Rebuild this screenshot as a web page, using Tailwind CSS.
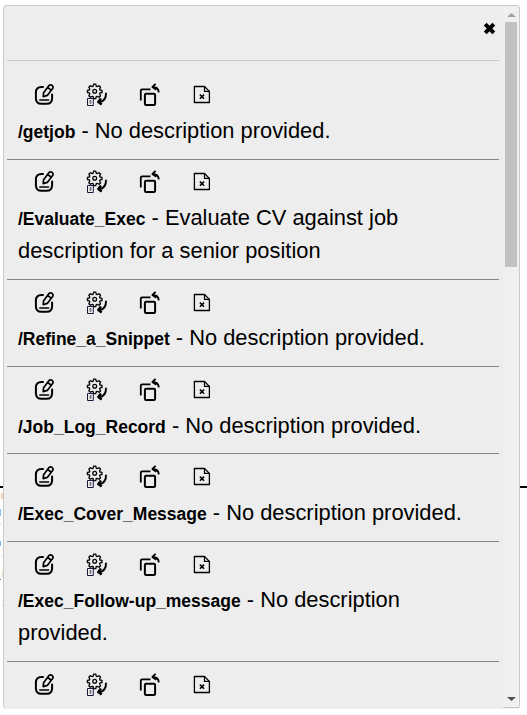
<!DOCTYPE html>
<html lang="en">
<head>
<meta charset="utf-8">
<title>Prompts</title>
<script src="https://cdn.jsdelivr.net/npm/@tailwindcss/browser@4"></script>
</head>
<body class="relative h-[715px] w-[527px] overflow-hidden bg-white font-['Liberation_Sans',Arial,sans-serif] text-black">
<svg class="hidden">
  <symbol id="edit" viewBox="0 0 24 24"><g fill="none" stroke="#000" stroke-width="2" stroke-linecap="round" stroke-linejoin="round"><path d="M11 4H9.5Q3.9 4 3.9 9.6V15.2Q3.9 20.8 9.5 20.8H14.5Q20.1 20.8 20.1 15.2V11.5"/><path d="M11.6 9.7 17 2.6Q18.3 1.1 20.1 2.4Q21.7 3.8 20.6 5.5L15.3 12.4 11.2 13.6ZM15.6 4.4l3.7 2.8" stroke-width="1.7"/><path d="M7.8 17H16.6" stroke-width="1.6"/></g></symbol>
  <symbol id="run" viewBox="0 0 24 24"><g fill="none" stroke="#000"><path stroke-width="1.3" stroke-linejoin="round" d="M8.6 1.2h2.2l.4 2 1.1.5 1.8-1.1 1.5 1.6-1 1.7.4 1.1 2 .4v2.1l-2 .4-.4 1.1 1 1.8-1.5 1.5-1.8-1-1.1.4-.4 2H8.6l-.4-2-1.1-.4-1.8 1-1.5-1.5 1-1.8-.4-1.1-2-.4V7.4l2-.4.4-1.1-1-1.7 1.5-1.6L7.1 3.7l1.1-.5z"/><circle cx="9.7" cy="8.2" r="1.9" stroke-width="1.3"/><path stroke="#17173f" d="M2.5 15.5h5.8v7h-5.8z"/><path stroke="#555" d="M4.2 18h2.6M5.5 17v3.5M4.2 20h2.6" stroke-width=".7"/><path stroke-width="1.9" d="M21 9.8Q21.3 17.7 14.7 19.2"/><path stroke-width="2.5" stroke-linejoin="round" d="M16 15.5 13.3 19l3.4 2.4"/></g></symbol>
  <symbol id="copy" viewBox="0 0 24 24"><g fill="none" stroke="#000" stroke-linejoin="round"><path stroke-width="1.8" d="M2.8 17.4V7.6Q2.8 6.4 4 6.4H12.5"/><rect x="6.9" y="10.7" width="10.2" height="11.2" rx="1.2" stroke-width="2"/><path stroke-width="1.9" d="M17.6 .9 14.4 3.9l3.9 2.9M14.6 3.9Q20.2 3.7 20.8 9.4"/></g></symbol>
  <symbol id="file" viewBox="0 0 24 24"><g fill="none" stroke="#000"><path stroke-width="1.3" stroke-linejoin="round" d="M3.4 3.5H13.5L18.4 8.4V19.5H3.4Z"/><path stroke-width="1.2" d="M13.5 3.5V8.4H18.4"/><path stroke-width="1.5" d="M8.9 11.6l4.2 4.1M13.1 11.6l-4.2 4.1"/></g></symbol>
</svg>

<div class="absolute left-0 top-[486px] h-[2px] w-[527px] bg-black"></div>
<div class="absolute left-0 top-[489px] flex w-[3px] flex-col">
  <i class="mt-[4px] h-[6px] w-[2px] self-end bg-[#f1d4b0]"></i>
  <i class="mt-[10px] h-[7px] w-[1px] bg-[#92bce4]"></i>
  <i class="mt-[8px] h-px w-[1px] bg-[#a9dcf0]"></i>
  <i class="mt-[16px] h-[5px] w-[1px] bg-[#7caee0]"></i>
  <i class="mt-[10px] h-px w-[2px] self-end bg-[#f2dfc4]"></i>
  <i class="mt-[13px] h-[9px] w-[1px] self-end bg-[#f5e3c9]"></i>
  <i class="h-px w-[1px] bg-[#4e79a8]"></i>
  <i class="mt-[25px] h-px w-[1px] self-end bg-[#e8c9a5]"></i>
</div>

<main class="relative ml-[3px] mt-[5px] flex h-[704px] w-[517px] overflow-hidden rounded-[4px] bg-[#ededed]">
  <div class="w-[500px] pl-[4px] pr-[4px]">
    <header class="mb-[12px] flex h-[56px] justify-end border-b border-[#cacaca] pr-[2px] pt-[16px]">
      <svg class="h-[15px] w-[15px]" viewBox="0 0 15 15"><path d="M3.2 3.2l8.6 8.6M11.8 3.2l-8.6 8.6" stroke="#000" stroke-width="4"/></svg>
    </header>
    <div id="rows"></div>
  </div>
  <aside class="flex w-[16px] flex-col items-center bg-[#f0f0f0]">
    <svg class="mt-[8px] h-[4px] w-[9px] shrink-0" viewBox="0 0 9 4"><path d="M4.5 0 9 4H0z" fill="#a3a3a3"/></svg>
    <div class="mt-[5px] h-[245px] w-[12px] bg-[#c1c1c1]"></div>
    <svg class="mb-[8px] mt-auto h-[4px] w-[9px] shrink-0" viewBox="0 0 9 4"><path d="M0 0h9L4.5 4z" fill="#505050"/></svg>
  </aside>
  <div class="pointer-events-none absolute inset-0 rounded-[4px] border border-b-0 border-[#c8c8c8]"></div>
  <div class="absolute bottom-[1px] right-0 h-px w-[17px] bg-[#c8c8c8]"></div>
</main>

<template id="row">
  <section class="overflow-hidden border-b border-[#858585]">
    <div class="flex gap-[29px] pl-[25px] pt-[10px]">
      <svg class="size-[24px]"><use href="#edit"/></svg>
      <svg class="size-[24px]"><use href="#run"/></svg>
      <svg class="size-[24px]"><use href="#copy"/></svg>
      <svg class="size-[24px]"><use href="#file"/></svg>
    </div>
    <p class="w-[440px] pl-[11px] text-[21.87px] leading-[33px] whitespace-pre"><b class="text-[17.5px] leading-none"></b><span></span></p>
  </section>
</template>
<script>
// name, description, row height, top inset, toolbar height
const rows = [
  ['/getjob', ' - No description provided.', 87, 0, 41],
  ['/Evaluate_Exec', ' - Evaluate CV against job\ndescription for a senior position', 120, 0, 41],
  ['/Refine_a_Snippet', ' - No description provided.', 87, 1, 40],
  ['/Job_Log_Record', ' - No description provided.', 87, 1, 41],
  ['/Exec_Cover_Message', ' - No description provided.', 88, 1, 41],
  ['/Exec_Follow-up_message', ' - No description\nprovided.', 120, 1, 40],
  ['', '', 48, 1, 41],
];
for (const [name, text, height, inset, toolbar] of rows) {
  const row = document.getElementById('row').content.firstElementChild.cloneNode(true);
  row.style.height = height + 'px';
  row.style.paddingTop = inset + 'px';
  row.firstElementChild.style.height = toolbar + 'px';
  row.querySelector('b').textContent = name;
  row.querySelector('span').textContent = text;
  if (!name) row.style.border = 'none';
  document.getElementById('rows').append(row);
}
</script>
</body>
</html>
